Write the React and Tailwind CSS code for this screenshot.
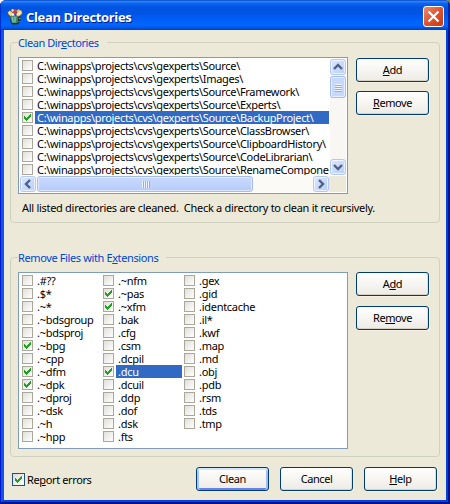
import React from "react";

const directories = [
  ["Source\\", false],
  ["Images\\", false],
  ["Source\\Framework\\", false],
  ["Source\\Experts\\", false],
  ["Source\\BackupProject\\", true],
  ["Source\\ClassBrowser\\", false],
  ["Source\\ClipboardHistory\\", false],
  ["Source\\CodeLibrarian\\", false],
  ["Source\\RenameComponents\\", false],
];

const extensions = [
  [".#??", ".$*", ".~*", ".~bdsgroup", ".~bdsproj", ".~bpg", ".~cpp", ".~dfm", ".~dpk", ".~dproj", ".~dsk", ".~h", ".~hpp"],
  [".~nfm", ".~pas", ".~xfm", ".bak", ".cfg", ".csm", ".dcpil", ".dcu", ".dcuil", ".ddp", ".dof", ".dsk", ".fts"],
  [".gex", ".gid", ".identcache", ".il*", ".kwf", ".map", ".md", ".obj", ".pdb", ".rsm", ".tds", ".tmp"],
];

const checkedExtensions = new Set([".~bpg", ".~dfm", ".~dpk", ".~pas", ".~xfm", ".dcu"]);

function Tick() {
  return (
    <svg width="7" height="7" viewBox="0 0 7 7" shapeRendering="crispEdges" fill="#21a121">
      <path d="M0 2h1v3h-1zM1 3h1v3h-1zM2 4h1v3h-1zM3 3h1v3h-1zM4 2h1v3h-1zM5 1h1v3h-1zM6 0h1v3h-1z" />
    </svg>
  );
}

function Box({ checked }) {
  return (
    <span className="flex h-[11px] w-[11px] shrink-0 items-center justify-center border border-[#aca899] bg-linear-to-br from-[#e0dfd9] to-white">
      {checked && <Tick />}
    </span>
  );
}

function Button({ children, primary, className = "" }) {
  return (
    <button
      className={`flex h-6 w-[73px] shrink-0 items-center justify-center rounded-[3px] border border-[#003c74] bg-linear-to-b from-white via-[#f6f5f1] to-[#ecebe5] pb-px leading-[13px] tracking-[-0.42px] ${
        primary
          ? "shadow-[inset_0_2px_0_#cee7ff,inset_2px_0_0_#a8c5f3,inset_-2px_0_0_#a0bdf0,inset_0_-2px_0_#6982ee]"
          : "shadow-[inset_0_-1px_0_#d6d0c5,inset_-1px_0_0_#e3dfd6,1px_1px_0_#f5f3e9]"
      } ${className}`}
    >
      <span>{children}</span>
    </button>
  );
}

function Key({ children }) {
  return <span className="underline decoration-1 underline-offset-[1px]">{children}</span>;
}

const arrowPaths = {
  up: "M4 10l4-4 4 4",
  down: "M4 6l4 4 4-4",
  left: "M10 4l-4 4 4 4",
  right: "M6 4l4 4-4 4",
};

function ArrowButton({ direction }) {
  return (
    <span className="flex h-4 w-4 shrink-0 items-center justify-center rounded-[3px] border border-[#b4c8f6] bg-linear-to-br from-[#dce7ff] to-[#b8cefb] shadow-[inset_0_0_0_1px_#ffffffaa]">
      <svg width="16" height="16" viewBox="0 0 16 16" className="shrink-0" fill="none" stroke="#4d6185" strokeWidth="2.4">
        <path d={arrowPaths[direction]} />
      </svg>
    </span>
  );
}

function AppIcon() {
  return (
    <svg width="16" height="17" viewBox="0 0 16 17">
      <path d="M3 7h9.5l1.5 3-1.5 5-2 1.5H5L3.5 14z" fill="#26302c" />
      <path d="M3 7.5h8.500l-1 7.500H5z" fill="#4b9a82" />
      <path d="M5.500 9l.6 5M8 9v5" stroke="#8cc7ad" strokeWidth="1" />
      <path d="M10.500 8.500l-.8 6" stroke="#2d6c5f" strokeWidth="1" />
      <path d="M.5 4.500l2-2 2.500 1 2 4-3.500.8-2-1.500z" fill="#f3dc8a" stroke="#5b4526" strokeWidth=".6" />
      <path d="M9 6l2.500-3.500 3-.5.8 3.500-3 2.700H9.500z" fill="#fbeaa4" stroke="#5a4325" strokeWidth=".6" />
      <circle cx="7.500" cy="3.600" r="2.500" fill="#d93a34" />
      <path d="M4 2l2-1.200L7 2.500 5.500 4z" fill="#f6e4b0" />
      <path d="M5 5l2 .5.5 2.300H5z" fill="#f7f2dc" />
      <path d="M9.500 2.500L12 1l1 1.500-2.500 2z" fill="#d8c070" />
      <path d="M12 10h1.500v1H12zM11.500 13h1v1h-1z" fill="#9aa39c" />
    </svg>
  );
}

function Group({ title, titleClass, className, children }) {
  return (
    <fieldset className={`w-[430px] rounded-[4px] border border-[#d0d0bf] pl-[7px] ${className}`}>
      <legend className={`h-[13px] pr-2 leading-[13px] whitespace-nowrap text-[#0046d5] ${titleClass}`}>{title}</legend>
      {children}
    </fieldset>
  );
}

export default function App() {
  return (
    <div className="h-[504px] w-[450px] overflow-hidden bg-linear-to-r from-white to-[#7d8a3c]">
      <main className="flex h-[504px] w-[450px] flex-col overflow-hidden rounded-t-[6px] bg-[#0831d9] font-['Noto_Sans',sans-serif] text-[11px] leading-[13px] text-black select-none">
        <header className="flex h-[30px] shrink-0 items-center bg-[linear-gradient(180deg,#0648c4_0%,#2a83f5_5%,#0b63ee_12%,#0053e1_25%,#0054e5_45%,#005ff8_65%,#0066ff_82%,#005cf0_90%,#0040c0_100%)] pt-[3px] pr-[6px] pl-[7px] shadow-[inset_-2px_0_0_#0024a8,inset_1px_0_0_#0030c8]">
          <AppIcon />
          <h1 className="ml-[3px] grow font-['Open_Sans',sans-serif] text-[13px] leading-4 font-bold tracking-[-0.35px] whitespace-nowrap text-white [text-shadow:1px_1px_0_#0a1883]">
            Clean Directories
          </h1>
          <button className="flex h-[21px] w-[21px] items-center justify-center rounded-[3px] border border-white bg-linear-to-br from-[#ee8a6c] via-[#e0502c] to-[#c63a12]">
            <svg width="13" height="13" viewBox="0 0 13 13" stroke="#fff" strokeWidth="2.2" fill="none">
              <path d="M1.500 1.500l10 10M11.500 1.500l-10 10" />
            </svg>
          </button>
        </header>

        <div className="flex h-[474px] border-r-2 border-b-2 border-l border-r-[#00138c] border-b-[#00138c] border-l-[#0019cf]">
          <div className="flex w-[447px] flex-col border-r-2 border-b-2 border-l-[3px] border-r-[#0441d8] border-b-[#0441e8] border-l-[#0f55e6]">
            <div className="flex grow flex-col bg-[#ece9d8] pt-[6px] pl-[6px]">
              <Group title={<>Clean Dir<Key>e</Key>ctories</>} titleClass="tracking-[-0.44px]" className="h-[187px]">
                <div className="mt-2 flex">
                  <div className="flex h-[137px] w-[330px] flex-col border border-[#7f9db9] bg-white p-px">
                    <div className="flex h-[117px]">
                      <ul className="h-[116px] w-[309px] overflow-hidden">
                        {directories.map(([name, checked]) => (
                          <li key={name} className="flex h-[13px] items-center pl-[2px]">
                            <Box checked={checked} />
                            <span
                              className={`ml-[2px] h-[13px] grow pl-[2px] leading-[13px] tracking-[-0.32px] whitespace-nowrap ${
                                checked ? "bg-[#316ac5] text-white" : ""
                              }`}
                            >
                              {"C:\\winapps\\projects\\cvs\\gexperts\\" + name}
                            </span>
                          </li>
                        ))}
                      </ul>
                      <div className="ml-px flex h-[116px] w-4 flex-col bg-[#f8f7f3]">
                        <ArrowButton direction="up" />
                        <div className="mt-px flex h-[22px] flex-col items-center justify-center gap-px rounded-[3px] border border-[#a5bdf3] bg-[#c8d8fd] shadow-[inset_0_0_0_1px_#ffffff99]">
                          {[0, 1, 2, 3].map((n) => (
                            <i key={n} className="h-px w-[7px] bg-[#eef4fe] shadow-[0_1px_0_#8cb0f8]" />
                          ))}
                        </div>
                        <div className="grow" />
                        <ArrowButton direction="down" />
                      </div>
                    </div>
                    <div className="flex h-4 bg-[#ece9d8]">
                      <div className="flex w-[309px] bg-[#fbfaf7]">
                        <ArrowButton direction="left" />
                        <div className="ml-px flex w-[216px] items-center justify-center gap-px rounded-[3px] border border-[#a5bdf3] bg-linear-to-b from-[#cbdafe] to-[#b6cbfb] shadow-[inset_0_0_0_1px_#ffffff88]">
                          {[0, 1, 2, 3].map((n) => (
                            <i key={n} className="h-[7px] w-px bg-[#eef4fe] shadow-[1px_0_0_#8cb0f8]" />
                          ))}
                        </div>
                        <div className="grow" />
                        <ArrowButton direction="right" />
                      </div>
                    </div>
                  </div>
                  <div className="mt-px ml-2 flex flex-col gap-[9px]">
                    <Button><Key>A</Key>dd</Button>
                    <Button><Key>R</Key>emove</Button>
                  </div>
                </div>
                <p className="mt-[7px] ml-1 tracking-[-0.29px] whitespace-pre">
                  {"All listed directories are cleaned.  Check a directory to clean it recursively."}
                </p>
              </Group>

              <Group title={<>Remove Files with E<Key>x</Key>tensions</>} titleClass="tracking-[-0.38px]" className="mt-7 h-[206px]">
                <div className="mt-2 flex">
                  <div className="flex h-[177px] w-[330px] border border-[#7f9db9] bg-white p-px">
                    {extensions.map((column, i) => (
                      <ul key={i} className="w-[81px]">
                        {column.map((ext) => (
                          <li key={ext} className="flex h-[13px] items-center pl-[2px]">
                            <Box checked={checkedExtensions.has(ext)} />
                            <span
                              className={`ml-[2px] h-[13px] grow pl-[2px] leading-[13px] tracking-[-0.28px] whitespace-nowrap ${
                                ext === ".dcu" ? "bg-[#316ac5] text-white" : ""
                              }`}
                            >
                              {ext}
                            </span>
                          </li>
                        ))}
                      </ul>
                    ))}
                  </div>
                  <div className="ml-2 flex flex-col gap-[10px]">
                    <Button>A<Key>d</Key>d</Button>
                    <Button>Re<Key>m</Key>ove</Button>
                  </div>
                </div>
              </Group>

              <footer className="mt-[10px] flex items-center pl-[2px]">
                <span className="flex h-[13px] w-[13px] items-center justify-center border border-[#1c5180] bg-linear-to-br from-[#dcdcd7] to-white">
                  <Tick />
                </span>
                <span className="ml-[2px] w-[169px] tracking-[-0.38px]">Re<Key>p</Key>ort errors</span>
                <Button primary>Clean</Button>
                <Button className="ml-[11px]">Cancel</Button>
                <Button className="ml-[11px]"><Key>H</Key>elp</Button>
              </footer>
            </div>
          </div>
        </div>
      </main>
    </div>
  );
}
